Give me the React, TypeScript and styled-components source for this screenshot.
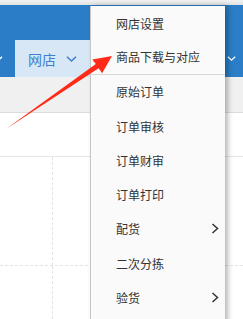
import styled, { createGlobalStyle } from 'styled-components';

const GlobalStyle = createGlobalStyle`
  html, body {
    margin: 0;
    padding: 0;
    background: #ffffff;
    font-family: "Noto Sans CJK SC", "Noto Sans", sans-serif;
  }
`;

const MENU_ITEMS = [
  { label: '网店设置' },
  { label: '商品下载与对应', divider: true },
  { label: '原始订单' },
  { label: '订单审核' },
  { label: '订单财审' },
  { label: '订单打印' },
  { label: '配货', sub: true },
  { label: '二次分拣' },
  { label: '验货', sub: true },
];

const Chevron = ({ color, width = 11, height = 6 }: { color: string; width?: number; height?: number }) => (
  <svg width={width} height={height} viewBox="0 0 11 6">
    <polyline points="1,0.8 5.5,5 10,0.8" fill="none" stroke={color} strokeWidth="1.5" />
  </svg>
);

const SubArrow = () => (
  <svg width="8" height="11" viewBox="0 0 8 11">
    <polyline points="1.5,1 6.5,5.5 1.5,10" fill="none" stroke="#333" strokeWidth="1.5" />
  </svg>
);

export default function App() {
  return (
    <>
      <GlobalStyle />
      <Page>
        <TopStrip />
        <NavBar>
          <NavLeft>
            <EdgeChevron>
              <Chevron color="#ffffff" />
            </EdgeChevron>
            <Tab>
              <TabLabel>网店</TabLabel>
              <Chevron color="#3f7fcf" />
            </Tab>
          </NavLeft>
          <RightChevron>
            <Chevron color="#ffffff" width={9} height={5} />
          </RightChevron>
        </NavBar>
        <SubBar />
        <Table>
          <HeaderRow />
          <BodyRow>
            <Cell $w={52} />
            <Cell />
          </BodyRow>
          <BodyRow>
            <Cell $w={52} />
            <Cell />
          </BodyRow>
        </Table>

        <Menu>
          {MENU_ITEMS.map((item) => (
            <MenuItem key={item.label} $divider={!!item.divider}>
              <span>{item.label}</span>
              {item.sub && <SubArrow />}
            </MenuItem>
          ))}
        </Menu>

        <Arrow width="243" height="319" viewBox="0 0 243 319">
          <polygon
            points="6,129 95.8,64.1 92.3,59.4 112,56 102.1,73.3 98.6,68.3"
            fill="#ff2a17"
          />
        </Arrow>
      </Page>
    </>
  );
}

const Page = styled.div`
  position: relative;
  width: 243px;
  height: 319px;
  overflow: hidden;
  background: #ffffff;
`;

const TopStrip = styled.div`
  height: 5px;
  background: linear-gradient(#f2f2f2, #e2e2e2);
`;

const NavBar = styled.div`
  height: 72px;
  background: #2a7dc6;
  display: flex;
  align-items: flex-end;
  justify-content: space-between;
`;

const NavLeft = styled.div`
  display: flex;
  align-items: flex-end;
`;

const EdgeChevron = styled.div`
  width: 15px;
  height: 37px;
  display: flex;
  align-items: center;
  margin-left: -8px;
  margin-right: 8px;
`;

const Tab = styled.div`
  width: 80px;
  height: 37px;
  box-sizing: border-box;
  padding-left: 13px;
  display: flex;
  align-items: center;
  gap: 10px;
  background: #d7e7f5;
`;

const TabLabel = styled.span`
  font-size: 14px;
  color: #3f7fcf;
`;

const RightChevron = styled.div`
  height: 37px;
  display: flex;
  align-items: center;
  padding-right: 7px;
`;

const SubBar = styled.div`
  height: 35px;
  background: #f0f0f0;
  border-bottom: 1px solid #dcdcdc;
`;

const Table = styled.div`
  display: flex;
  flex-direction: column;
`;

const HeaderRow = styled.div`
  height: 43px;
  border-bottom: 1px solid #e6e6e6;
`;

const BodyRow = styled.div`
  display: flex;
  height: 108px;
  border-bottom: 1px dashed #e4e4e4;
`;

const Cell = styled.div<{ $w?: number }>`
  ${({ $w }) => ($w ? `width: ${$w}px; border-right: 1px dashed #e4e4e4;` : 'flex: 1;')}
`;

const Menu = styled.ul`
  position: absolute;
  left: 90px;
  top: 6px;
  width: 135px;
  bottom: -10px;
  margin: 0;
  padding: 0;
  list-style: none;
  background: #fafafa;
  border-left: 1px solid #c6c6c6;
  box-shadow: 3px 0 5px rgba(0, 0, 0, 0.28);
  box-sizing: border-box;
`;

const MenuItem = styled.li<{ $divider: boolean }>`
  height: 34.3px;
  box-sizing: border-box;
  padding: 0 6px 0 25px;
  display: flex;
  align-items: center;
  justify-content: space-between;
  font-size: 12px;
  color: #333333;
  border-bottom: ${({ $divider }) => ($divider ? '1px solid #d8d8d8' : 'none')};
`;

const Arrow = styled.svg`
  position: absolute;
  left: 0;
  top: 0;
  pointer-events: none;
`;
